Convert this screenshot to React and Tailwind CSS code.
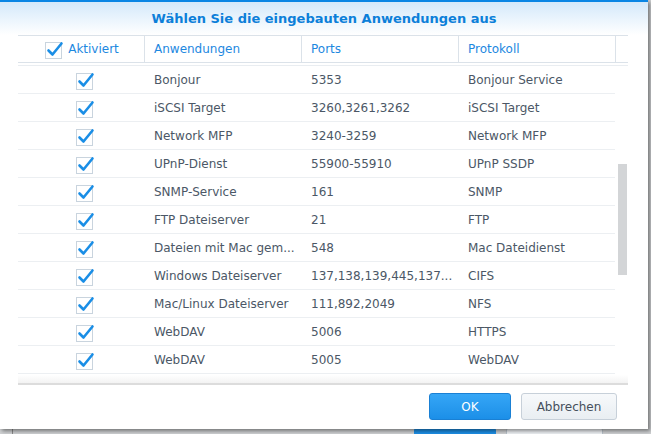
import React from 'react';

const rows = [
  ['Bonjour', '5353', 'Bonjour Service'],
  ['iSCSI Target', '3260,3261,3262', 'iSCSI Target'],
  ['Network MFP', '3240-3259', 'Network MFP'],
  ['UPnP-Dienst', '55900-55910', 'UPnP SSDP'],
  ['SNMP-Service', '161', 'SNMP'],
  ['FTP Dateiserver', '21', 'FTP'],
  ['Dateien mit Mac gem...', '548', 'Mac Dateidienst'],
  ['Windows Dateiserver', '137,138,139,445,137...', 'CIFS'],
  ['Mac/Linux Dateiserver', '111,892,2049', 'NFS'],
  ['WebDAV', '5006', 'HTTPS'],
  ['WebDAV', '5005', 'WebDAV'],
];

const Check = () => (
  <svg width="19" height="19" viewBox="0 0 19 19">
    <rect x="0.5" y="2.5" width="16" height="16" fill="#fff" stroke="#c9d4de" />
    <path d="M3.5 10.5 L7.5 14.5 L16.5 3.5" fill="none" stroke="#1a8ee6" strokeWidth="2.6" strokeLinecap="round" strokeLinejoin="round" />
  </svg>
);

export default function App() {
  return (
    <div className="relative w-[651px] h-[434px] overflow-hidden bg-[#cfd1d3]" style={{ fontFamily: '"DejaVu Sans", Verdana, sans-serif' }}>
      {/* page behind the dialog */}
      <div className="absolute left-[414px] top-[428px] w-[82px] h-[10px] bg-[#1d8fe6] rounded-[2px]" />
      <div className="absolute left-[506px] top-[428px] w-[97px] h-[10px] bg-[#eef1f4] border border-[#b9c2cb] rounded-[2px]" />
      <div className="absolute left-[12px] top-[429px] w-px h-[6px] bg-[#8a8a8a]" />

      <div className="relative flex flex-col w-[648px] h-[429px] bg-white border-t-2 border-[#0a86e4] shadow-[2px_2px_4px_rgba(0,0,0,0.45)]">
        <div className="h-[33px] flex items-center justify-center bg-gradient-to-b from-[#d4e9fa] to-white">
          <h1 className="text-[13px] font-bold text-[#0c7fd9]">Wählen Sie die eingebauten Anwendungen aus</h1>
        </div>

        <div className="ml-[18px] w-[610px] flex flex-col flex-1">
          <div className="flex h-[28px] border-t border-b border-[#dbe2e9] text-[12px] text-[#1d88df]">
            <div className="w-[126px] flex items-center justify-center gap-[4px] pl-[2px]">
              <Check />
              <span>Aktiviert</span>
            </div>
            <div className="w-[157px] flex items-center pl-[9px] border-l border-[#dbe2e9]">Anwendungen</div>
            <div className="w-[157px] flex items-center pl-[9px] border-l border-[#dbe2e9]">Ports</div>
            <div className="w-[157px] flex items-center pl-[9px] border-l border-[#dbe2e9]">Protokoll</div>
            <div className="flex-1 border-l border-[#dbe2e9]" />
          </div>

          <div className="mt-[2px] border-t border-[#e9edf1] h-[318px] flex overflow-hidden">
            <div className="w-[597px] flex flex-col">
              {rows.map((r, i) => (
                <div key={i} className="flex h-[28px] shrink-0 pt-[1px] border-b border-[#eceff2] text-[12px] text-[#4b5766]">
                  <div className="w-[126px] flex items-center justify-center pl-[9px]">
                    <Check />
                  </div>
                  <div className="w-[157px] flex items-center pl-[10px] whitespace-nowrap overflow-hidden">{r[0]}</div>
                  <div className="w-[157px] flex items-center pl-[10px] whitespace-nowrap overflow-hidden">{r[1]}</div>
                  <div className="w-[157px] flex items-center pl-[10px] whitespace-nowrap overflow-hidden">{r[2]}</div>
                </div>
              ))}
            </div>
            <div className="flex-1 pt-[98px] pl-[3px]">
              <div className="w-[9px] h-[111px] bg-[#d3d5d7]" />
            </div>
          </div>
          <div className="h-[8px] -mt-[8px] bg-gradient-to-b from-white to-[#f3f3f3] relative" />
          <div className="h-[2px] bg-[#dcdcdc]" />

          <div className="flex-1 flex items-center justify-end gap-[10px] pr-[11px] pb-[1px]">
            <button className="w-[82px] h-[27px] rounded-[3px] border border-[#1a80d4] bg-gradient-to-b from-[#35a6f6] to-[#1b8fe8] text-white text-[12px]">OK</button>
            <button className="w-[96px] h-[27px] rounded-[3px] border border-[#c7d0d9] bg-gradient-to-b from-[#f7f9fb] to-[#e9eef2] text-[#454f5b] text-[12px]">Abbrechen</button>
          </div>
        </div>
      </div>
    </div>
  );
}
